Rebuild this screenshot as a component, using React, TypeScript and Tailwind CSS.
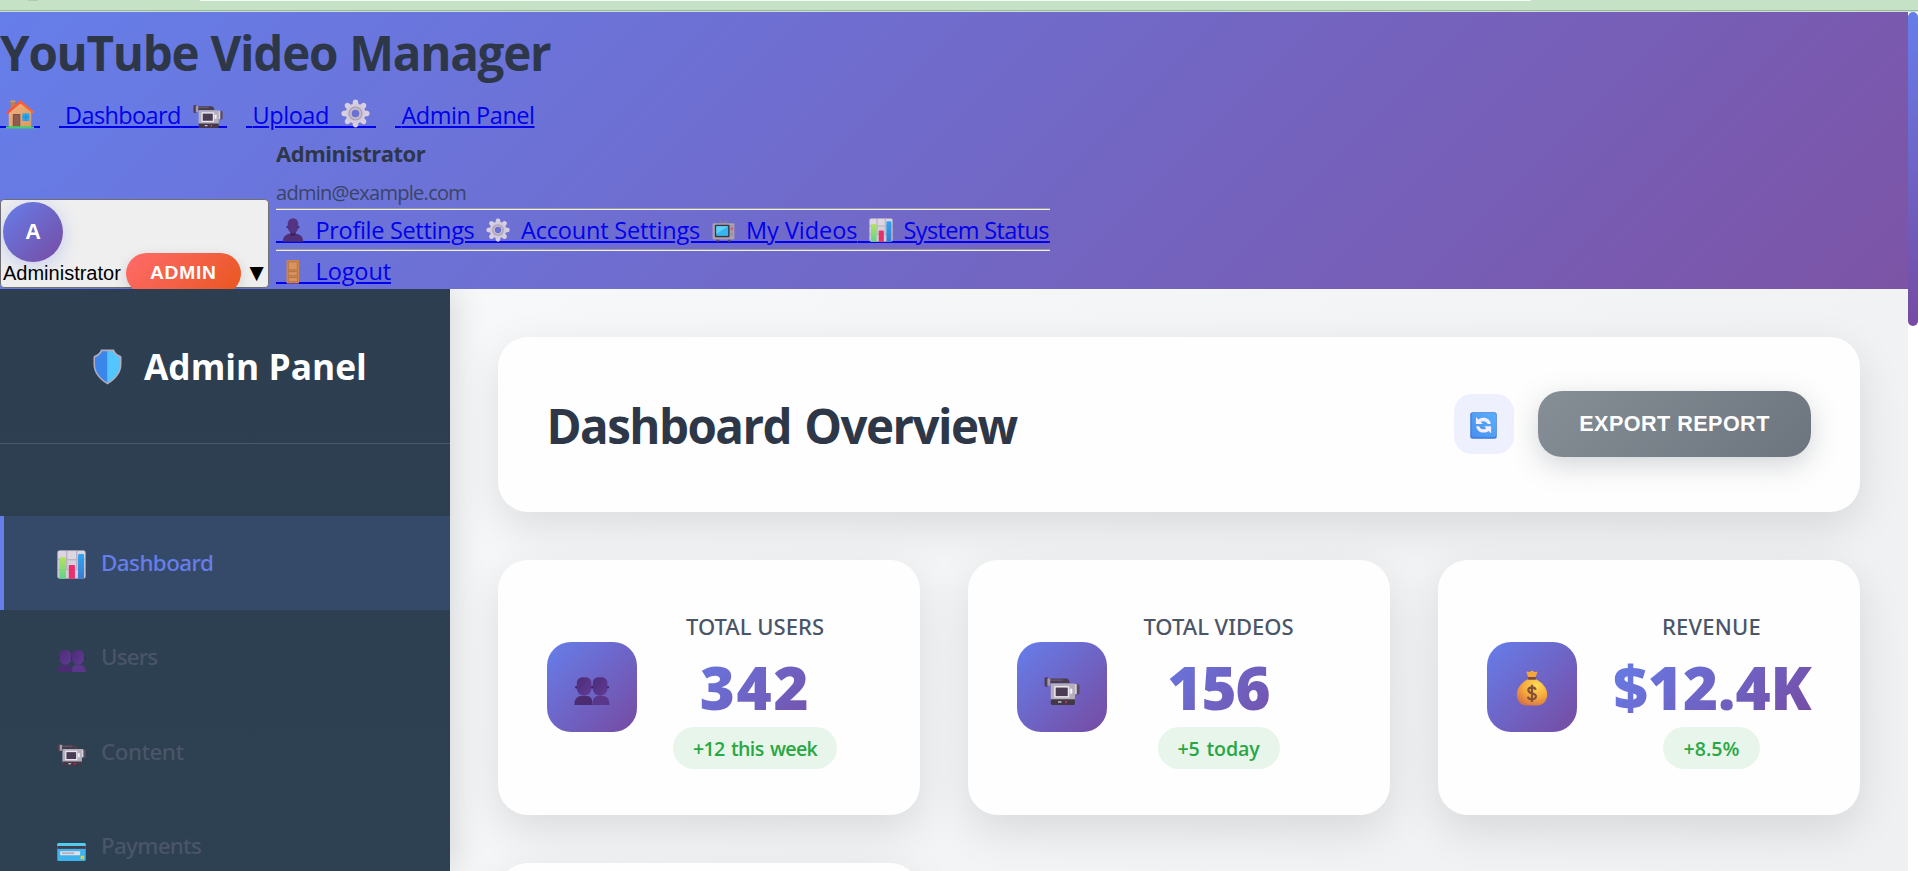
import type { ReactNode } from "react";

type IconProps = { className?: string };

function Svg({ className = "", children }: { className?: string; children: ReactNode }) {
  return (
    <svg viewBox="0 0 32 32" className={`block shrink-0 ${className}`} aria-hidden="true">
      {children}
    </svg>
  );
}

function House({ className }: IconProps) {
  return (
    <Svg className={className}>
      <defs>
        <linearGradient id="houseWall" x1="0" y1="0" x2="1" y2="1">
          <stop offset="0" stopColor="#f2b27c" />
          <stop offset="1" stopColor="#d99a66" />
        </linearGradient>
        <linearGradient id="houseRoof" x1="0" y1="0" x2="1" y2="0">
          <stop offset="0" stopColor="#ff4a3a" />
          <stop offset="1" stopColor="#ff6a2a" />
        </linearGradient>
      </defs>
      <path d="M6 2.2h4.6V12H6z" fill="#b9824f" />
      <path d="M5.6 1.6h5.4v1.8H5.6z" fill="#cf9a63" />
      <path d="M4 13.5 16.5 3.5 28 13.5V30H4z" fill="url(#houseWall)" />
      <path d="M16.5 1.2 30.6 13.2c1 1-.4 2.6-1.6 1.8L16.5 4.9 3.4 15.6C2 16.4.6 15 1.7 13.8z" fill="url(#houseRoof)" />
      <rect x="8.3" y="16" width="8" height="14" rx=".8" fill="#7d4f45" />
      <rect x="9.2" y="17" width="6.2" height="13" fill="#8e5c50" />
      <rect x="18.5" y="15.5" width="7.5" height="8" rx=".6" fill="#2aa6ee" />
      <path d="M22.2 15.5v8M18.5 19.4h7.5" stroke="#1a86d4" strokeWidth=".8" />
      <rect x="1" y="29" width="30" height="2.4" rx="1" fill="#3fcf6e" />
    </Svg>
  );
}

function Camera({ className }: IconProps) {
  return (
    <Svg className={className}>
      <path d="M4 7.6h16c1.5 0 2.5 1.4 2.9 4H4z" fill="#4a3d4c" />
      <path d="M3.5 8.5h13v1H3.5z" fill="#6d5d70" />
      <rect x=".5" y="6.5" width="3.2" height="8.3" rx="1" fill="#4e3f52" />
      <rect x="3" y="7.5" width="2.6" height="6.5" fill="#a79dac" />
      <rect x="28" y="12.8" width="3.6" height="9" rx="1" fill="#5b4c60" />
      <rect x="25.5" y="12.5" width="3.6" height="9" rx=".8" fill="#d9d3de" />
      <rect x="6" y="12" width="21.5" height="16" rx="1" fill="#b5aebb" />
      <rect x="9" y="14.2" width="13.5" height="10.3" rx=".8" fill="#ebe6f0" />
      <rect x="10.4" y="15.6" width="10.7" height="7.6" fill="#4a3c52" />
      <rect x="23" y="16.5" width="2.2" height="4.8" rx="1" fill="#f2eef5" />
      <path d="M6 26h21.5v3.7c0 .8-.5 1.3-1.3 1.3H7.3C6.5 31 6 30.5 6 29.7z" fill="#43384a" />
      <rect x="12.5" y="27.8" width="3" height="1.2" fill="#d5ced9" />
      <circle cx="19.5" cy="28.4" r=".9" fill="#f0304e" />
    </Svg>
  );
}

const TEETH = [0, 45, 90, 135, 180, 225, 270, 315];

function Gear({ className }: IconProps) {
  return (
    <Svg className={className}>
      {TEETH.map((a) => (
        <path
          key={a}
          transform={`rotate(${a} 16 16)`}
          d="M12.4 8.5 13 3.2C13.3 1.3 14.4.5 16 .5s2.7.8 3 2.7l.6 5.3z"
          fill="#d8d0e2"
        />
      ))}
      <circle cx="16" cy="16" r="11" fill="#d3cbdd" />
      <circle cx="16" cy="16" r="7.8" fill="#a9a0b5" />
      <circle cx="16" cy="16" r="6.3" fill="#c5bdd0" />
      <circle cx="16" cy="16" r="4.2" fill="#6c70d2" />
    </Svg>
  );
}

function Person({ className }: IconProps) {
  return (
    <Svg className={className}>
      <path d="M2.5 31.5c0-7 4-9.5 9-10.5h9c5 1 9 3.500 9 10.500z" fill="#4f2f78" />
      <path d="M12.5 17h7v5.500c-2 2-5 2-7 0z" fill="#3c2260" />
      <path d="M9 8c0-4.800 2.700-7.500 7-7.500S23 3.200 23 8v4c0 4.500-3 8-7 8s-7-3.500-7-8z" fill="#553383" />
      <circle cx="8.6" cy="12" r="1.5" fill="#452a6c" />
      <circle cx="23.4" cy="12" r="1.5" fill="#452a6c" />
    </Svg>
  );
}

function Users({ className }: IconProps) {
  return (
    <Svg className={className}>
      <defs>
        <linearGradient id="bust" x1="0" y1="0" x2="1" y2="1">
          <stop offset="0" stopColor="#4c2d76" />
          <stop offset="1" stopColor="#613a96" />
        </linearGradient>
      </defs>
      <path d="M.3 31c0-5 2.5-7.600 5.700-8h6c3 .4 4.500 3 4.500 8z" fill="#4b2c73" />
      <path d="M16.5 31c0-5 1.500-7.600 4.500-8h5c3.500.4 5.500 3 5.500 8z" fill="#5a378b" />
      <circle cx="2.2" cy="15.3" r="1.1" fill="#3a2260" />
      <circle cx="16" cy="15.3" r="1.2" fill="#3a2260" />
      <circle cx="30" cy="15.3" r="1.1" fill="#3a2260" />
      <path d="M2.5 12c0-3.800 2.200-5.500 6.500-5.500s6.500 1.700 6.500 5.500v4c0 3.800-2.700 6.800-6.500 6.800S2.500 19.800 2.500 16z" fill="url(#bust)" />
      <path d="M16.7 12c0-3.800 2.200-5.500 6.500-5.500s6.500 1.700 6.500 5.500v4c0 3.800-2.700 6.800-6.500 6.800s-6.500-3-6.500-6.800z" fill="url(#bust)" />
    </Svg>
  );
}

function Television({ className }: IconProps) {
  return (
    <Svg className={className}>
      <path d="M11 1.5 16 7l5-5.500" fill="none" stroke="#8b8291" strokeWidth="1.4" />
      <path d="M6 28h4.500l-1 3.500h-3zM21.500 28H26l-.5 3.500h-3z" fill="#5b4a52" />
      <rect x=".8" y="6" width="30.4" height="22.5" rx="1.5" fill="#aaa1ae" />
      <rect x="4" y="8" width="20.5" height="17.5" rx="1.5" fill="#3b3340" />
      <rect x="6" y="10" width="16.5" height="13.5" fill="#35b6ee" />
      <path d="M6 10h16.500L6 21z" fill="#5fd0fa" />
      <path d="M27.8 10.500v6M25.800 13.500h4" stroke="#e0456a" strokeWidth="1.2" />
      <path d="M26 20h3.500M26 22.500h3.500" stroke="#8a8190" strokeWidth="1" />
    </Svg>
  );
}

function Chart({ className }: IconProps) {
  return (
    <Svg className={className}>
      <defs>
        <linearGradient id="barGreen" x1="0" y1="0" x2="0" y2="1">
          <stop offset="0" stopColor="#b4e45c" />
          <stop offset="1" stopColor="#5fd38b" />
        </linearGradient>
        <linearGradient id="barBlue" x1="0" y1="0" x2="0" y2="1">
          <stop offset="0" stopColor="#30a4f2" />
          <stop offset="1" stopColor="#3a7cd0" />
        </linearGradient>
      </defs>
      <rect x=".3" y=".3" width="31.4" height="31.4" rx="3" fill="#b9b2c0" />
      <rect x="1.2" y="1.2" width="8.8" height="8.8" rx="1.5" fill="#dcd6e3" />
      <rect x="11.5" y="1.2" width="9.5" height="8.8" fill="#dcd6e3" />
      <rect x="22.5" y="1.2" width="8.3" height="8.8" rx="1.5" fill="#dcd6e3" />
      <rect x="1.2" y="11.4" width="8.8" height="9.5" fill="#d6d0de" />
      <rect x="11.5" y="11.4" width="9.5" height="9.5" fill="#d6d0de" />
      <rect x="22.5" y="11.4" width="8.3" height="9.5" fill="#d6d0de" />
      <rect x="1.2" y="22.2" width="29.6" height="8.8" rx="1.5" fill="#d3ccda" />
      <path d="M2.5 31.7V9.500c0-1 .6-1.600 1.500-1.600h4.500c.9 0 1.500.6 1.500 1.600v22.200z" fill="url(#barGreen)" />
      <path d="M13 31.7V18c0-.9.6-1.400 1.400-1.400h4c.9 0 1.400.5 1.400 1.400v13.700z" fill="#e6316f" />
      <path d="M23.2 31.7V6c0-1 .6-1.600 1.500-1.600h3.700c.9 0 1.500.6 1.500 1.600v25.700z" fill="url(#barBlue)" />
    </Svg>
  );
}

function Door({ className }: IconProps) {
  return (
    <svg viewBox="0 0 14 26" className={`block shrink-0 ${className ?? ""}`} aria-hidden="true">
      <rect x=".5" y="1" width="13" height="24.5" rx=".8" fill="#cf864e" />
      <rect x="2.3" y="3" width="9.4" height="8.3" fill="#d8935e" stroke="#b06e3e" strokeWidth=".8" />
      <rect x="2.3" y="13.2" width="9.4" height="4.2" fill="#d8935e" stroke="#b06e3e" strokeWidth=".8" />
      <rect x="2.3" y="19.3" width="9.4" height="4.3" fill="#d8935e" stroke="#b06e3e" strokeWidth=".8" />
    </svg>
  );
}

function Shield({ className }: IconProps) {
  return (
    <svg viewBox="0 0 29 36" className={`block shrink-0 ${className ?? ""}`} aria-hidden="true">
      <path
        d="M8 .6h13c1 2.700 3.200 5 6 6 1 .4 1.500 1 1.500 2v7c0 8.500-6 15-14 20C6.500 30.600.5 24.100.5 15.600v-7c0-1 .5-1.600 1.500-2 2.800-1 5-3.300 6-6z"
        fill="#b3adbd"
      />
      <path d="M14.5 2.200H9c-1.200 2.700-3.500 4.900-6.300 5.900-.5.200-.7.500-.7 1v6.500c0 7.600 5.300 13.500 12.500 18.200z" fill="#3a86ea" />
      <path d="M14.5 2.200H20c1.200 2.700 3.500 4.900 6.300 5.900.5.200.7.500.7 1v6.500c0 7.600-5.300 13.500-12.500 18.200z" fill="#53c5ff" />
    </svg>
  );
}

function Card({ className }: IconProps) {
  return (
    <Svg className={className}>
      <rect x=".3" y="11" width="31.4" height="20" rx="1.8" fill="#3eb4ec" />
      <path d="M.3 14.500v-1.700C.3 11.800 1.100 11 2.100 11h27.800c1 0 1.800.8 1.800 1.800v1.700z" fill="#4dd0ee" />
      <rect x=".3" y="14.3" width="31.4" height="3.2" fill="#453d4b" />
      <rect x="3.5" y="20" width="22" height="4.5" rx=".5" fill="#e3dfe8" />
      <rect x="5.5" y="21.3" width="13.5" height="2" fill="#b7b1bd" />
      <rect x="26" y="25" width="4" height="4" rx="1" fill="#e0cc4a" />
    </Svg>
  );
}

function Refresh({ className }: IconProps) {
  return (
    <Svg className={className}>
      <defs>
        <linearGradient id="refreshTile" x1="1" y1="0" x2="0" y2="1">
          <stop offset="0" stopColor="#57b0fb" />
          <stop offset="1" stopColor="#4a8ff0" />
        </linearGradient>
      </defs>
      <rect x=".3" y=".3" width="31.4" height="31.4" rx="3" fill="#3d78df" />
      <rect x="1.8" y="1.3" width="29" height="28.5" rx="2.2" fill="url(#refreshTile)" />
      <path d="M7 6v8.300h8.200l-2.600-2.600c2.800-1.700 7.200-1 8.500 2.600h3.600C24 9.300 20 6.800 16 6.900c-2.400 0-4.500.8-6.200 2.100z" fill="#f6effb" />
      <path d="M25 25.500v-8.700h-8.200l2.600 2.900c-2.800 1.700-7.200 1-8.500-2.900H7.300c.7 5 4.700 7.700 8.700 7.600 2.400 0 4.500-.8 6.200-2z" fill="#f6effb" />
    </Svg>
  );
}

function MoneyBag({ className }: IconProps) {
  return (
    <Svg className={className}>
      <defs>
        <radialGradient id="bag" cx=".65" cy=".25" r=".85">
          <stop offset="0" stopColor="#ffdc55" />
          <stop offset=".55" stopColor="#f5a63c" />
          <stop offset="1" stopColor="#cf6f45" />
        </radialGradient>
      </defs>
      <path d="M11.3 1.500c1.200-.6 2.200.6 3 0 .8-1 2.500-1.400 3.500 0 .9.600 1.900-.4 2.900.1.600.5-.9 2.700-1.500 5h-6.500c-.6-2.300-2-4.500-1.400-5.100z" fill="#f6a53c" />
      <path d="M12.7 8h6.600c5 2.700 10.200 7.500 10.200 13.500 0 6.500-4 10-8.500 10H11c-4.500 0-8.500-3.500-8.500-10C2.500 15.500 7.700 10.700 12.700 8z" fill="url(#bag)" />
      <rect x="12.3" y="6.3" width="7.4" height="2.4" rx="1.1" fill="#7c4a3c" />
      <path
        d="M19.300 17.600c-.3-1.500-1.600-2.200-3.300-2.200-1.900 0-3.300.9-3.300 2.500 0 3.700 6.800 1.700 6.800 5.500 0 1.700-1.500 2.700-3.500 2.700s-3.400-.9-3.600-2.500M16 13v15.500"
        fill="none"
        stroke="#85503a"
        strokeWidth="1.9"
      />
    </Svg>
  );
}

/** Underlined stretch of a link; may carry an emoji. */
function Cell({ className, children }: { className: string; children?: ReactNode }) {
  return <span className={`flex shrink-0 items-start border-b-2 border-[#0000ee] ${className}`}>{children}</span>;
}

function LinkText({ className, children }: { className: string; children: ReactNode }) {
  return (
    <span
      className={`shrink-0 whitespace-nowrap text-[23.5px] text-[#0000ee] underline decoration-2 underline-offset-2 ${className}`}
    >
      {children}
    </span>
  );
}

function Rule() {
  return <div className="h-[2px] border-t border-b border-t-[#9a9a9a] border-b-[#eeeeee]" />;
}

function SiteHeader() {
  return (
    <header className="relative z-20 flex h-[277px] shrink-0 flex-col overflow-hidden bg-[linear-gradient(135deg,#667eea_0%,#7c54a6_100%)]">
      <h1 className="h-[79px] text-[47.5px] leading-[81px] font-bold tracking-[-1.25px] [word-spacing:1px] whitespace-nowrap text-[#2d3748]">
        YouTube Video Manager
      </h1>
      <nav className="flex h-12 leading-[48px]">
        <a className="flex">
          <Cell className="h-[37px] w-[39.5px] pt-2 pl-[4.5px]">
            <House className="size-[30px]" />
          </Cell>
          <span className="w-[19.5px]" />
          <Cell className="h-[37px] w-[6px]" />
          <LinkText className="tracking-[-0.61px]">Dashboard</LinkText>
        </a>
        <a className="flex">
          <Cell className="h-[37px] w-[45.8px] pt-2 pl-3">
            <Camera className="size-[30px]" />
          </Cell>
          <span className="w-[19.4px]" />
          <Cell className="h-[37px] w-[6.5px]" />
          <LinkText className="tracking-[-0.43px]">Upload</LinkText>
        </a>
        <a className="flex">
          <Cell className="h-[37px] w-[47px] pt-2 pl-[12.5px]">
            <Gear className="size-[29px]" />
          </Cell>
          <span className="w-[19px]" />
          <Cell className="h-[37px] w-[6.5px]" />
          <LinkText className="tracking-[-0.46px]">Admin Panel</LinkText>
        </a>
      </nav>
      <div className="flex h-[150px] items-start gap-[7.5px]">
        <button className="mt-[60px] flex h-[89px] w-[268.5px] shrink-0 flex-col items-start rounded-[4px] border border-[#6f6f74] bg-[#efefef] pt-[2px] pl-[2px] font-['Liberation_Sans',sans-serif]">
          <span className="flex size-[60px] shrink-0 items-center justify-center rounded-full bg-[linear-gradient(135deg,#667eea,#764ba2)] pt-px text-[21.6px] font-bold text-white shadow-[0_4px_18px_rgba(102,126,234,0.3)]">
            A
          </span>
          <span className="-mt-[9px] flex h-[41px] shrink-0 items-center">
            <span className="-mt-px w-[123px] shrink-0 text-left text-[20px] text-black">Administrator</span>
            <span className="flex h-[41px] w-[115px] shrink-0 items-center rounded-full bg-[linear-gradient(135deg,#ff6b6b,#e8561f)] pl-[24px] text-[19.2px] font-bold tracking-[0.75px] text-white shadow-[0_4px_14px_rgba(0,0,0,0.13)]">
              ADMIN
            </span>
            <span className="-mt-[2px] ml-[8.5px] font-['DejaVu_Sans',sans-serif] text-[18.5px] text-black">▼</span>
          </span>
        </button>
        <div className="w-[774px]">
          <div className="h-7 text-[22px] leading-7 font-bold tracking-[-0.48px] text-[#2d3748]">Administrator</div>
          <div className="h-[41px] pt-[10px] text-[20px] leading-8 tracking-[-0.72px] text-[#3a4468]">
            admin@example.com
          </div>
          <Rule />
          <div className="flex h-[39px] leading-[40px]">
            <Cell className="h-[33px] w-[39.5px] pt-2 pl-[4.5px]">
              <Person className="size-[24px]" />
            </Cell>
            <LinkText className="tracking-[-0.32px]">Profile Settings</LinkText>
            <Cell className="h-[33px] w-[46.6px] pt-2 pl-3">
              <Gear className="size-[24px]" />
            </Cell>
            <LinkText className="tracking-[-0.19px]">Account Settings</LinkText>
            <Cell className="h-[33px] w-[46px] pt-[9px] pl-3">
              <Television className="size-[23px]" />
            </Cell>
            <LinkText className="tracking-[-0.04px]">My Videos</LinkText>
            <Cell className="h-[33px] w-[46px] pt-2 pl-[11px]">
              <Chart className="size-[24px]" />
            </Cell>
            <LinkText className="tracking-[-0.64px]">System Status</LinkText>
            <Cell className="h-[33px] w-[1.5px]" />
          </div>
          <Rule />
          <div className="flex h-[38px] leading-[40px]">
            <Cell className="h-[33px] w-[39.5px] pt-2 pl-[9.5px]">
              <Door className="h-[25px] w-[13.5px]" />
            </Cell>
            <LinkText className="tracking-[-0.1px]">Logout</LinkText>
          </div>
        </div>
      </div>
    </header>
  );
}

function SideItem({ icon, label, tone, frame }: { icon: ReactNode; label: string; tone: string; frame: string }) {
  return (
    <li className={`flex h-[94.4px] items-center border-l-4 pl-[53px] ${frame}`}>
      <span className="mt-[2px]">{icon}</span>
      <span className={`-mt-px ml-[15px] font-['Noto_Sans',sans-serif] text-[22.4px] font-medium ${tone}`}>{label}</span>
    </li>
  );
}

function Sidebar() {
  return (
    <aside className="relative z-10 w-[450px] shrink-0 bg-[linear-gradient(180deg,#2c3e50,#2e4153)] shadow-[6px_0_30px_rgba(0,0,0,0.12)]">
      <div className="flex h-[155px] items-center border-b border-[#485868] pl-[93px]">
        <Shield className="mt-[2px] h-[36px] w-[29px]" />
        <h2 className="mt-[2px] ml-[22px] text-[35.3px] leading-none font-bold text-white">Admin Panel</h2>
      </div>
      <ul className="pt-[72px]">
        <SideItem
          icon={<Chart className="size-[29px]" />}
          label="Dashboard"
          tone="text-[#667eea] tracking-[-0.56px]"
          frame="border-[#667eea] bg-[#354a69]"
        />
        <SideItem
          icon={<Users className="size-[29px]" />}
          label="Users"
          tone="text-[#4a5568] tracking-[-0.86px]"
          frame="border-transparent"
        />
        <SideItem
          icon={<Camera className="size-[29px]" />}
          label="Content"
          tone="text-[#4a5568] tracking-[-0.5px]"
          frame="border-transparent"
        />
        <SideItem
          icon={<Card className="size-[29px]" />}
          label="Payments"
          tone="text-[#4a5568] tracking-[-0.71px]"
          frame="border-transparent"
        />
      </ul>
    </aside>
  );
}

type StatProps = {
  icon: ReactNode;
  label: string;
  labelClass: string;
  value: string;
  valueClass: string;
  note: string;
  noteClass: string;
};

function Stat({ icon, label, labelClass, value, valueClass, note, noteClass }: StatProps) {
  return (
    <div className="flex h-[255px] items-center rounded-[30px] bg-[#fefefe] pl-[49px] shadow-[0_15px_45px_rgba(0,0,0,0.11)]">
      <div className="-mt-px flex size-[90px] shrink-0 items-center justify-center rounded-[24px] bg-[linear-gradient(135deg,#667eea,#764ba2)]">
        {icon}
      </div>
      <div className="ml-9 flex flex-col items-center pt-[2px]">
        <div
          className={`h-[35px] font-['Noto_Sans',sans-serif] text-[22px] leading-[35px] font-medium whitespace-nowrap text-[#4a5568] ${labelClass}`}
        >
          {label}
        </div>
        <div
          className={`mt-[2px] bg-[linear-gradient(135deg,#667eea,#764ba2)] bg-clip-text text-center font-['Noto_Sans',sans-serif] text-[60px] leading-[82px] font-black whitespace-nowrap text-transparent ${valueClass}`}
        >
          {value}
        </div>
        <div
          className={`-mt-px flex h-[42px] items-center justify-center rounded-[21px] bg-[#e8f5eb] pt-[2px] text-[19.6px] font-semibold whitespace-nowrap text-[#28a745] ${noteClass}`}
        >
          {note}
        </div>
      </div>
    </div>
  );
}

function Main() {
  return (
    <main className="flex-1 bg-[linear-gradient(135deg,#f7f8f9,#eff0f2)] px-12 pt-12">
      <section className="flex h-[175px] items-center rounded-[30px] bg-[#fefefe] pr-[49px] pl-[48.5px] shadow-[0_15px_45px_rgba(0,0,0,0.11)]">
        <h2 className="mt-[3px] flex-1 text-[47.5px] leading-[64px] font-bold tracking-[-1.55px] [word-spacing:2.5px] text-[#2d3748]">
          Dashboard Overview
        </h2>
        <button className="-mt-px flex size-[60px] items-center justify-center rounded-[18px] bg-[#eef1fd]">
          <Refresh className="mt-[3px] -ml-px size-[27px]" />
        </button>
        <button className="-mt-px ml-6 h-[66px] w-[273px] rounded-[24px] bg-[linear-gradient(135deg,#868e96,#6c757d)] font-['Liberation_Sans',sans-serif] text-[21.6px] font-bold tracking-[0.45px] text-white shadow-[0_8px_28px_rgba(108,117,125,0.3)]">
          EXPORT REPORT
        </button>
      </section>
      <section className="mt-12 grid grid-cols-3 gap-12">
        <Stat
          icon={<Users className="mt-[2px] size-[36px]" />}
          label="TOTAL USERS"
          labelClass="tracking-[0.03px]"
          value="342"
          valueClass="w-[164px] tracking-[1.6px]"
          note="+12 this week"
          noteClass="w-[164px] tracking-[-0.66px] [word-spacing:2px]"
        />
        <Stat
          icon={<Camera className="mt-[2px] size-[36px]" />}
          label="TOTAL VIDEOS"
          labelClass="tracking-[0px]"
          value="156"
          valueClass="w-[151px] tracking-[-1px]"
          note="+5 today"
          noteClass="w-[122px] tracking-[-0.15px] [word-spacing:2px]"
        />
        <Stat
          icon={<MoneyBag className="mt-[1px] size-[36px]" />}
          label="REVENUE"
          labelClass="tracking-[0.21px] -ml-[2px]"
          value="$12.4K"
          valueClass="w-[199px] tracking-[0px]"
          note="+8.5%"
          noteClass="w-[97px] -ml-[2px] tracking-[0.01px]"
        />
        <div className="h-[255px] rounded-[30px] bg-[#fefefe] shadow-[0_15px_45px_rgba(0,0,0,0.11)]" />
      </section>
    </main>
  );
}

export default function App() {
  return (
    <div className="flex h-[871px] w-[1918px] flex-col overflow-hidden bg-white font-['Open_Sans','Noto_Sans',sans-serif]">
      <div className="flex h-3 shrink-0 flex-col bg-[#c6e2c6]">
        <div className="flex h-[10px]">
          <span className="ml-[28px] h-px w-[10px] bg-[#b0cbb0]" />
          <span className="ml-[162px] h-px w-[1331px] bg-[#f4faf4]" />
        </div>
        <div className="h-px bg-[#9bb89f]" />
        <div className="h-px bg-[#c9dfd0]" />
      </div>
      <div className="flex h-[859px]">
        <div className="flex w-[1908px] flex-col overflow-hidden">
          <SiteHeader />
          <div className="flex h-[582px]">
            <Sidebar />
            <Main />
          </div>
        </div>
        <div className="w-[10px] bg-white">
          <div className="h-[314px] rounded-full bg-[linear-gradient(180deg,#667eea,#764ba2)]" />
        </div>
      </div>
    </div>
  );
}
